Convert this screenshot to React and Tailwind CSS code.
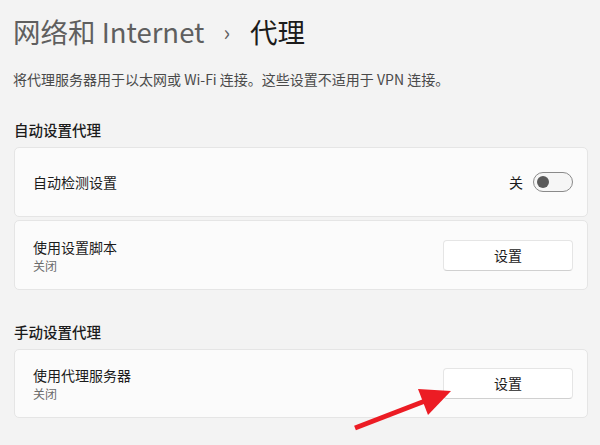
const font = { fontFamily: '"Noto Sans CJK SC", "Noto Sans", sans-serif' };

function Toggle() {
    return (
        <div className="w-[40px] h-[20px] rounded-full border border-[#8a8a8a] bg-[#f6f6f6] flex items-center px-[3px]">
            <div className="w-[12px] h-[12px] rounded-full bg-[#5a5a5a]" />
        </div>
    );
}

function SetButton() {
    return (
        <button className="w-[130px] h-[31px] rounded-[4px] bg-white border border-[#e5e5e5] border-b-[#d0d0d0] text-[14px] text-[#1b1b1b]">
            设置
        </button>
    );
}

function TwoLine({ title, sub }) {
    return (
        <div className="flex flex-col">
            <span className="text-[14px] leading-[20px] text-[#1b1b1b]">{title}</span>
            <span className="text-[12px] leading-[17px] text-[#6b6b6b]">{sub}</span>
        </div>
    );
}

const App = function() {
    return (
        <div style={font} className="relative w-[600px] h-[445px] overflow-hidden bg-[#f3f3f3] pl-[14px] pr-[12px] pt-[12px]">
            <h1 className="flex items-center text-[27.5px] leading-[38px] ml-[-1px]">
                <span className="text-[#5f5f5f]">网络和 Internet</span>
                <span className="text-[#5f5f5f] text-[22px] ml-[19px] mr-[20px]">›</span>
                <span className="text-[#1b1b1b]">代理</span>
            </h1>
            <p className="mt-[20px] text-[14px] leading-[18px] text-[#4a4a4a] ml-[-1px]">
                将代理服务器用于以太网或 Wi-Fi 连接。这些设置不适用于 VPN 连接。
            </p>

            <h2 className="mt-[32px] text-[14.5px] leading-[20px] text-[#1b1b1b] font-medium">自动设置代理</h2>
            <div className="mt-[7px] flex flex-col gap-[3px]">
                <div className="h-[70px] rounded-[5px] bg-[#fbfbfb] border border-[#e5e5e5] flex items-center justify-between pl-[18px] pr-[14px]">
                    <span className="text-[14px] text-[#1b1b1b]">自动检测设置</span>
                    <div className="flex items-center gap-[10px]">
                        <span className="text-[14px] text-[#1b1b1b]">关</span>
                        <Toggle />
                    </div>
                </div>
                <div className="h-[70px] rounded-[5px] bg-[#fbfbfb] border border-[#e5e5e5] flex items-center justify-between pl-[18px] pr-[14px]">
                    <TwoLine title="使用设置脚本" sub="关闭" />
                    <SetButton />
                </div>
            </div>

            <h2 className="mt-[32px] text-[14.5px] leading-[20px] text-[#1b1b1b] font-medium">手动设置代理</h2>
            <div className="mt-[7px] h-[69px] rounded-[5px] bg-[#fbfbfb] border border-[#e5e5e5] flex items-center justify-between pl-[18px] pr-[14px]">
                <TwoLine title="使用代理服务器" sub="关闭" />
                <SetButton />
            </div>

            {/* red annotation arrow */}
            <svg className="absolute left-0 top-0 pointer-events-none" width="600" height="445">
                <line x1="355" y1="428" x2="425" y2="401" stroke="#ec1c24" strokeWidth="5" />
                <polygon points="451,391 418,389 428,415" fill="#ec1c24" />
            </svg>
        </div>
    );
};

export default App;
